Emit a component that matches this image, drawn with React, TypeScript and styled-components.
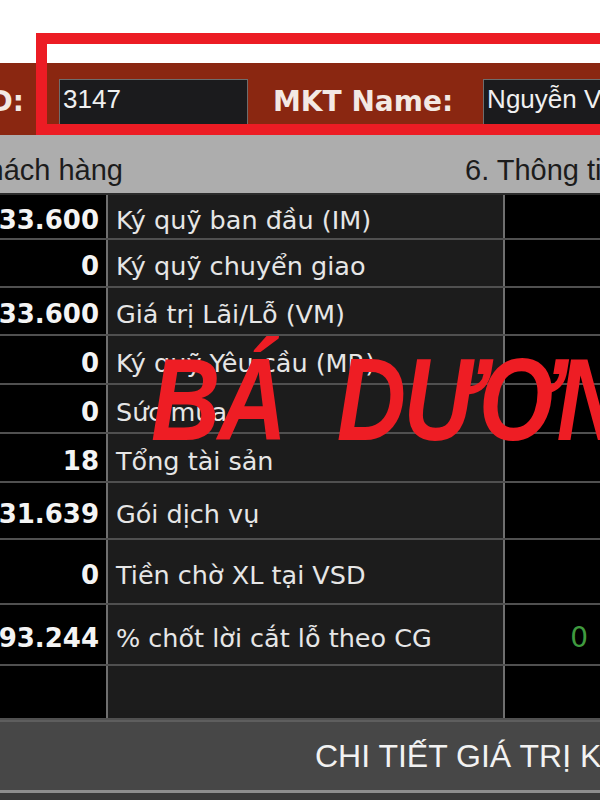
import React from "react";
import styled, { createGlobalStyle } from "styled-components";

const GlobalStyle = createGlobalStyle`
  html, body {
    margin: 0;
    padding: 0;
    background: #ffffff;
    overflow: hidden;
  }
`;

const Screen = styled.div`
  position: relative;
  width: 600px;
  height: 800px;
  overflow: hidden;
  background: #ffffff;
  font-family: "DejaVu Sans", sans-serif;
`;

const TopSpace = styled.div`
  height: 63px;
  background: #ffffff;
`;

const InfoBar = styled.div`
  display: flex;
  align-items: flex-start;
  height: 72px;
  padding-top: 16px;
  box-sizing: border-box;
  background: #8a2711;
  white-space: nowrap;
`;

const FieldLabel = styled.div<{ $width?: number; $gap: number; $lead?: number }>`
  display: flex;
  justify-content: flex-end;
  flex-shrink: 0;
  width: ${(p) => (p.$width ? `${p.$width}px` : "auto")};
  margin-left: ${(p) => p.$lead ?? 0}px;
  margin-right: ${(p) => p.$gap}px;
  overflow: hidden;
  height: 45px;
  align-items: center;
  font-family: "DejaVu Sans", sans-serif;
  font-weight: bold;
  font-size: 28px;
  color: #f3e9e4;
`;

const FieldBox = styled.div<{ $width: number }>`
  flex-shrink: 0;
  width: ${(p) => p.$width}px;
  height: 45px;
  box-sizing: border-box;
  border: 1px solid #6d6d6d;
  border-bottom: none;
  background: #1b1b1d;
  padding: 4px 0 0 3px;
  font-family: "Liberation Sans", Arial, sans-serif;
  font-size: 26px;
  color: #f0f0f0;
  overflow: hidden;
`;

const SectionBar = styled.div`
  display: flex;
  align-items: center;
  height: 60px;
  box-sizing: border-box;
  padding-top: 12px;
  background: #adadad;
  border-bottom: 2px solid #2b2b2b;
  font-family: "Liberation Sans", Arial, sans-serif;
  font-size: 29px;
  color: #1c1c1c;
  white-space: nowrap;
`;

const SectionTitle = styled.div<{ $width: number; $clipStart?: boolean }>`
  display: flex;
  justify-content: ${(p) => (p.$clipStart ? "flex-end" : "flex-start")};
  flex-shrink: 0;
  width: ${(p) => p.$width}px;
  overflow: hidden;
`;

const Table = styled.div`
  display: flex;
  flex-direction: column;
`;

const Row = styled.div<{ $height: number }>`
  display: flex;
  height: ${(p) => p.$height}px;
  box-sizing: border-box;
  border-bottom: 2px solid #505050;
`;

const ValueCell = styled.div`
  display: flex;
  justify-content: flex-end;
  align-items: center;
  width: 108px;
  flex-shrink: 0;
  padding: 6px 7px 0 0;
  box-sizing: border-box;
  background: #000000;
  border-right: 2px solid #6f6f6f;
  overflow: hidden;
  white-space: nowrap;
  font-weight: bold;
  font-size: 26px;
  color: #f4f4f4;
`;

const LabelCell = styled.div`
  display: flex;
  align-items: center;
  width: 397px;
  flex-shrink: 0;
  padding: 6px 0 0 8px;
  box-sizing: border-box;
  background: #1c1c1c;
  border-right: 2px solid #6f6f6f;
  white-space: nowrap;
  font-size: 25.5px;
  color: #e6e6e6;
`;

const ExtraCell = styled.div`
  display: flex;
  justify-content: flex-end;
  align-items: center;
  flex: 1;
  padding: 6px 12px 0 0;
  background: #000000;
  font-size: 28px;
  color: #3f9a3f;
`;

const DetailBar = styled.div`
  height: 70px;
  box-sizing: border-box;
  padding: 16px 0 0 315px;
  background: #474747;
  border-top: 2px solid #5e5e5e;
  font-family: "Liberation Sans", Arial, sans-serif;
  font-size: 32px;
  color: #f2f2f2;
  white-space: nowrap;
`;

const BottomEdge = styled.div`
  height: 8px;
  background: #3a3a3a;
  border-top: 3px solid #8e8e8e;
`;

const Highlight = styled.div`
  position: absolute;
  left: 36px;
  top: 33px;
  width: 640px;
  height: 102px;
  box-sizing: border-box;
  border: 11px solid #ec1c24;
  pointer-events: none;
`;

const Watermark = styled.div`
  position: absolute;
  left: 151px;
  top: 341px;
  font-family: "Liberation Sans", Arial, sans-serif;
  font-weight: bold;
  font-style: italic;
  font-size: 117px;
  line-height: 1;
  letter-spacing: -3px;
  word-spacing: 34px;
  color: #ee1d24;
  white-space: nowrap;
  transform: scaleX(0.82);
  transform-origin: left top;
  pointer-events: none;
`;

type Item = { value: string; label: string; extra?: string; height: number };

const items: Item[] = [
  { value: "3.333.600", label: "Ký quỹ ban đầu (IM)", height: 45 },
  { value: "0", label: "Ký quỹ chuyển giao", height: 48 },
  { value: "3.333.600", label: "Giá trị Lãi/Lỗ (VM)", height: 48 },
  { value: "0", label: "Ký quỹ Yêu cầu (MR)", height: 49 },
  { value: "0", label: "Sức mua", height: 49 },
  { value: "18", label: "Tổng tài sản", height: 49 },
  { value: "1.331.639", label: "Gói dịch vụ", height: 57 },
  { value: "0", label: "Tiền chờ XL tại VSD", height: 65 },
  { value: "4.593.244", label: "% chốt lời cắt lỗ theo CG", extra: "0", height: 61 },
  { value: "", label: "", height: 54 },
];

export default function App() {
  return (
    <>
      <GlobalStyle />
      <Screen>
        <TopSpace />
        <InfoBar>
          <FieldLabel $width={24} $gap={35}>MKT ID:</FieldLabel>
          <FieldBox $width={189}>3147</FieldBox>
          <FieldLabel $gap={30} $lead={25}>MKT Name:</FieldLabel>
          <FieldBox $width={240}>Nguyễn Văn Hùng</FieldBox>
        </InfoBar>
        <SectionBar>
          <SectionTitle $width={465} $clipStart>
            <span style={{ marginRight: 342 }}>5. Thông tin khách hàng</span>
          </SectionTitle>
          <SectionTitle $width={300}>6. Thông tin tài khoản</SectionTitle>
        </SectionBar>
        <Table>
          {items.map((it, i) => (
            <Row key={i} $height={it.height}>
              <ValueCell>{it.value}</ValueCell>
              <LabelCell>{it.label}</LabelCell>
              <ExtraCell>{it.extra}</ExtraCell>
            </Row>
          ))}
        </Table>
        <DetailBar>CHI TIẾT GIÁ TRỊ KÝ QUỸ</DetailBar>
        <BottomEdge />
        <Highlight />
        <Watermark>BÁ DƯƠNG</Watermark>
      </Screen>
    </>
  );
}
